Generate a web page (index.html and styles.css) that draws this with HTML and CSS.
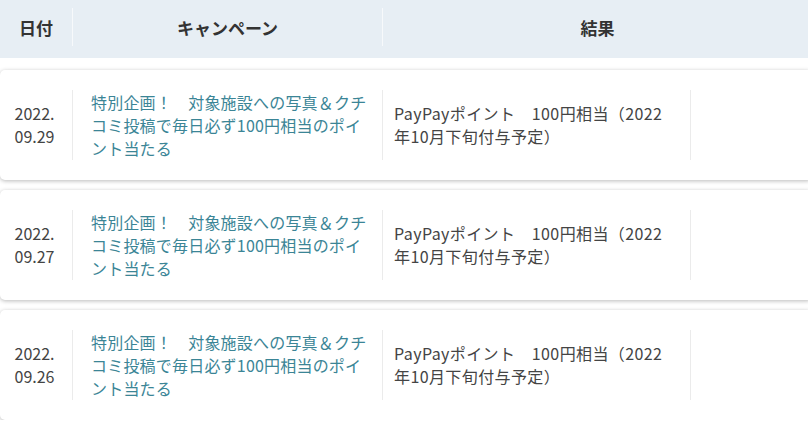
FILE: index.html
```html
<!DOCTYPE html>
<html lang="ja">
<head>
    <meta charset="UTF-8">
    <title>キャンペーン履歴</title>
    <link rel="stylesheet" href="styles.css">
</head>
<body>

    <div class="history">

        <!-- Column titles -->
        <div class="history-head">
            <div class="head-cell">日付</div>
            <div class="head-cell">キャンペーン</div>
            <div class="head-cell">結果</div>
        </div>

        <!-- One card per entry -->
        <div class="entry">
            <div class="cell cell-date"><span>2022.</span><span>09.29</span></div>
            <div class="cell cell-campaign">特別企画！　対象施設への写真＆クチコミ投稿で毎日必ず100円相当のポイント当たる</div>
            <div class="cell cell-result">PayPayポイント　100円相当（2022年10月下旬付与予定）</div>
            <div class="cell cell-action"></div>
        </div>

        <div class="entry">
            <div class="cell cell-date"><span>2022.</span><span>09.27</span></div>
            <div class="cell cell-campaign">特別企画！　対象施設への写真＆クチコミ投稿で毎日必ず100円相当のポイント当たる</div>
            <div class="cell cell-result">PayPayポイント　100円相当（2022年10月下旬付与予定）</div>
            <div class="cell cell-action"></div>
        </div>

        <div class="entry">
            <div class="cell cell-date"><span>2022.</span><span>09.26</span></div>
            <div class="cell cell-campaign">特別企画！　対象施設への写真＆クチコミ投稿で毎日必ず100円相当のポイント当たる</div>
            <div class="cell cell-result">PayPayポイント　100円相当（2022年10月下旬付与予定）</div>
            <div class="cell cell-action"></div>
        </div>

    </div>

</body>
</html>
```

FILE: styles.css
```css
/* General page styling */
body {
    margin: 0;
    font-family: "Noto Sans CJK JP", "Noto Sans", sans-serif;
    color: #3a3a3a;
    background: #fff;
    overflow: hidden;
}

.history {
    width: 812px;
}

/* Header row */
.history-head {
    display: grid;
    grid-template-columns: 72px 310px 1fr;
    height: 58px;
    padding: 8px 0 12px;
    box-sizing: border-box;
    background: #e7eef4;
}

.head-cell {
    display: flex;
    align-items: center;
    justify-content: center;
    font-size: 17px;
    font-weight: bold;
    color: #333;
}

.head-cell + .head-cell {
    border-left: 1px solid #f7f9fb;
}

/* Entry cards */
.entry {
    display: grid;
    grid-template-columns: 72px 310px 308px 1fr;
    margin-top: 12px;
    padding: 20px 0;
    background: #fff;
    border-radius: 5px;
    box-shadow: 0 1px 4px rgba(0, 0, 0, 0.28);
}

.entry + .entry {
    margin-top: 10px;
}

.cell {
    display: flex;
    align-items: center;
    min-height: 70px;
    font-size: 16px;
    line-height: 23px;
}

.cell + .cell {
    border-left: 1px solid #ebebeb;
}

.cell-date {
    flex-direction: column;
    justify-content: center;
    padding-right: 3px;
    color: #444;
}

.cell-campaign {
    padding: 0 14px 0 18px;
    letter-spacing: 0.2px;
    color: #3b8596;
}

.cell-result {
    padding: 0 20px 0 11px;
    letter-spacing: 0.4px;
    color: #444;
}
```
